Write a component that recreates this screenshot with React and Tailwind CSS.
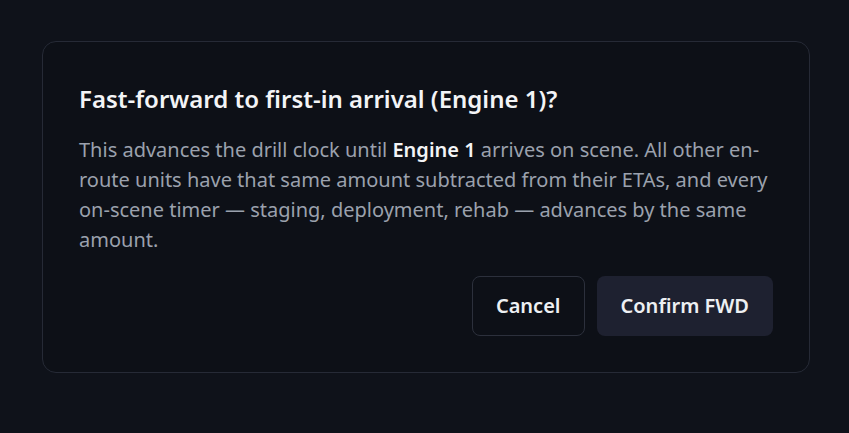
export default function App() {
  return (
    <div
      className="min-h-[433px] w-full bg-[#0f121a] pt-[41px]"
      style={{ fontFamily: '"Noto Sans", "Open Sans", sans-serif' }}
    >
      <div className="ml-[42px] w-[768px] rounded-[14px] border border-[#262a36] bg-[#0d1017] px-9 pt-[41px] pb-9">
        <h2 className="text-[24px] leading-8 font-semibold text-[#f3f4f6]">
          Fast-forward to first-in arrival (Engine 1)?
        </h2>
        <p className="mt-[20px] text-[20px] leading-[30px] text-[#9ba1ad]">
          This advances the drill clock until{" "}
          <span className="font-semibold text-[#f3f4f6]">Engine 1</span> arrives
          on scene. All other en-route units have that same amount subtracted
          from their ETAs, and every on-scene timer — staging, deployment, rehab
          — advances by the same amount.
        </p>
        <div className="mt-[21px] flex justify-end gap-3">
          <button className="h-[60px] rounded-lg border border-[#2c303c] bg-transparent px-[23px] text-[20px] font-semibold text-[#eef0f3]">
            Cancel
          </button>
          <button className="h-[60px] rounded-lg bg-[#1e2130] px-6 text-[20px] font-semibold text-[#eef0f3]">
            Confirm FWD
          </button>
        </div>
      </div>
    </div>
  );
}
